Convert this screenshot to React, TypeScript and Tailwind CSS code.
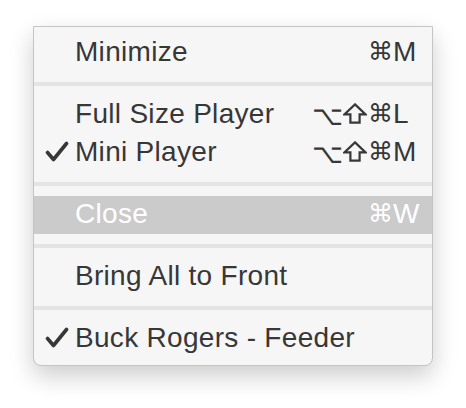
import React from 'react';

type Item =
  | { kind: 'item'; label: string; checked?: boolean; active?: boolean; mods?: string[]; keyChar?: string }
  | { kind: 'sep' };

const ITEMS: Item[] = [
  { kind: 'item', label: 'Minimize', mods: ['⌘'], keyChar: 'M' },
  { kind: 'sep' },
  { kind: 'item', label: 'Full Size Player', mods: ['⌥', '⇧', '⌘'], keyChar: 'L' },
  { kind: 'item', label: 'Mini Player', checked: true, mods: ['⌥', '⇧', '⌘'], keyChar: 'M' },
  { kind: 'sep' },
  { kind: 'item', label: 'Close', active: true, mods: ['⌘'], keyChar: 'W' },
  { kind: 'sep' },
  { kind: 'item', label: 'Bring All to Front' },
  { kind: 'sep' },
  { kind: 'item', label: 'Buck Rogers - Feeder', checked: true },
];

// fixed widths + per-glyph font so modifiers line up like the native menu columns
const MOD_CLASS: Record<string, string> = {
  '⌥': "w-[29px] font-['Noto_Sans_CJK_JP',sans-serif] text-[27px]",
  '⌘': "w-[25px] font-['DejaVu_Sans',sans-serif] text-[25px]",
};

function CheckMark() {
  return (
    <svg width="24" height="22" viewBox="0 0 24 22" className="mt-[7px]">
      <path
        d="M2.5 11.5 L8.5 18.5 L21.5 2.5"
        fill="none"
        stroke="currentColor"
        strokeWidth="3.6"
        strokeLinecap="round"
        strokeLinejoin="round"
      />
    </svg>
  );
}

// shift key symbol, the fonts here only have a thin narrow arrow
function ShiftIcon() {
  return (
    <span className="w-[27px] flex justify-center">
      <svg width="24" height="21" viewBox="0 0 24 21" className="mt-[7px]">
        <path
          d="M12 1.4 L22.6 11.4 H16.6 V19.6 H7.4 V11.4 H1.4 Z"
          fill="none"
          stroke="currentColor"
          strokeWidth="2.2"
          strokeLinejoin="miter"
        />
      </svg>
    </span>
  );
}

function Shortcut({ mods, keyChar }: { mods: string[]; keyChar: string }) {
  return (
    <div className="flex items-start h-full">
      <div className="flex items-start justify-end leading-[36px]">
        {mods.map((m, i) =>
          m === '⇧' ? (
            <ShiftIcon key={i} />
          ) : (
            <span key={i} className={`${MOD_CLASS[m]} text-center`}>
              {m}
            </span>
          )
        )}
      </div>
      <span className="w-[34px]">{keyChar}</span>
    </div>
  );
}

export default function App() {
  return (
    <div className="min-h-screen bg-white pt-[26px] pl-[33px]">
      <div className="w-[400px] bg-[#f6f6f6] border border-[#c4c4c4] rounded-b-[8px] shadow-[0_10px_24px_rgba(0,0,0,0.2)] py-[7px] text-[#373737] font-['Liberation_Sans',Arial,sans-serif] text-[28px] tracking-[0.3px]">
        {ITEMS.map((item, idx) => {
          if (item.kind === 'sep') {
            return (
              <div key={idx} className="py-[10px]">
                <div className="h-[4px] bg-[#e4e4e4]" />
              </div>
            );
          }
          return (
            <div
              key={idx}
              className={`flex items-start h-[38px] leading-[36px] pr-[5px] ${
                item.active ? 'bg-[#cbcbcb] text-white' : ''
              }`}
            >
              <div className="w-[41px] pl-[11px]">{item.checked && <CheckMark />}</div>
              <div className="flex-1">{item.label}</div>
              {item.mods && item.keyChar && <Shortcut mods={item.mods} keyChar={item.keyChar} />}
            </div>
          );
        })}
      </div>
    </div>
  );
}
